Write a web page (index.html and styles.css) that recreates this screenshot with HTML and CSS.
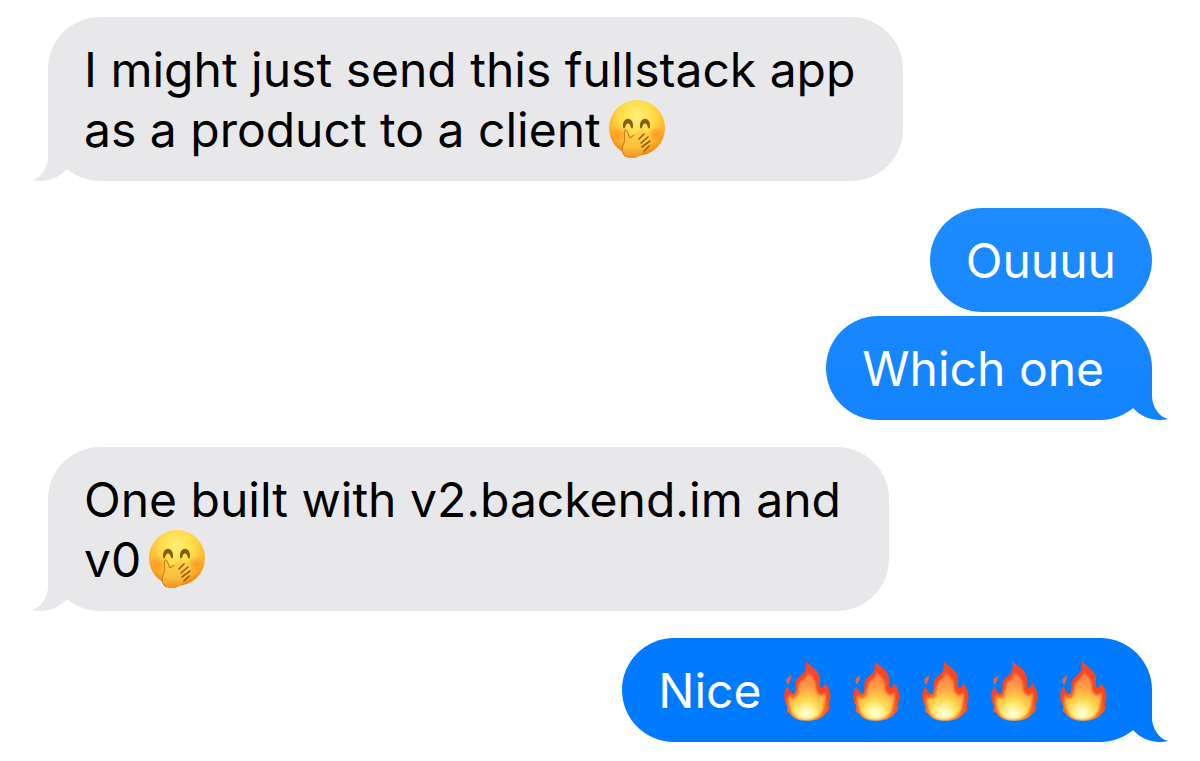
FILE: index.html
```html
<!DOCTYPE html>
<html lang="en">

<head>
    <meta charset="UTF-8">
    <meta name="viewport" content="width=device-width, initial-scale=1.0">
    <title>Messages</title>
    <link rel="stylesheet" href="styles.css">
</head>

<body>
    <!-- shared shapes -->
    <svg class="defs" aria-hidden="true">
        <defs>
            <radialGradient id="skin" cx="50%" cy="30%" r="68%">
                <stop offset="0" stop-color="#fff07a" />
                <stop offset="0.45" stop-color="#ffdb48" />
                <stop offset="0.78" stop-color="#fcb32a" />
                <stop offset="1" stop-color="#e98a1c" />
            </radialGradient>
            <radialGradient id="blush">
                <stop offset="0" stop-color="#ff7a1c" stop-opacity="0.55" />
                <stop offset="1" stop-color="#ff7a1c" stop-opacity="0" />
            </radialGradient>
            <linearGradient id="hand" x1="0" y1="0" x2="0" y2="1">
                <stop offset="0" stop-color="#ffd04a" />
                <stop offset="0.6" stop-color="#ffbf3c" />
                <stop offset="1" stop-color="#f08f20" />
            </linearGradient>
            <radialGradient id="flame-out" gradientUnits="userSpaceOnUse" cx="98" cy="180" r="150">
                <stop offset="0" stop-color="#ffc43a" />
                <stop offset="0.3" stop-color="#ff7a28" />
                <stop offset="0.5" stop-color="#f8441f" />
                <stop offset="1" stop-color="#f24a2c" />
            </radialGradient>
            <radialGradient id="flame-in" gradientUnits="userSpaceOnUse" cx="98" cy="192" r="140">
                <stop offset="0" stop-color="#ffffe8" />
                <stop offset="0.14" stop-color="#fff8a0" />
                <stop offset="0.34" stop-color="#ffd348" />
                <stop offset="0.6" stop-color="#ff9c46" />
                <stop offset="1" stop-color="#fb7046" />
            </radialGradient>
            <filter id="soft" x="-20%" y="-20%" width="140%" height="140%">
                <feGaussianBlur stdDeviation="4" />
            </filter>
        </defs>
        <symbol id="giggle" viewBox="8 8 56 58">
            <circle cx="36" cy="36" r="28" fill="url(#skin)" />
            <ellipse cx="17" cy="42" rx="9" ry="8" fill="url(#blush)" />
            <ellipse cx="55" cy="42" rx="9" ry="8" fill="url(#blush)" />
            <path d="M22 35C21 24 33 24 32 35C31 38 30 36 29 33C28 31 26 31 25 33C24 36 23 38 22 35Z" fill="#85600f" />
            <path d="M39 35C38 24 50 24 49 35C48 38 47 36 46 33C45 31 43 31 42 33C41 36 40 38 39 35Z" fill="#85600f" />
            <path d="M24 38C26 37 27 42 29 46L39 38C42 36 44 38 42 41L45 40C48 40 49 42 47 44C50 43 51 46 49 48C51 48 51 51 49 52L42 60C38 66 31 68 25 65C20 62 21 56 23 51C25 46 22 41 24 38Z" fill="url(#hand)" />
            <path d="M24 38C22 42 25 46 23 51C20 57 21 62 25 65" fill="none" stroke="#c97a16" stroke-width="1" />
            <path d="M24 38C26 37 27 42 29 46L33 43" fill="none" stroke="#a8701a" stroke-width="1" />
            <path d="M38 47L43 42M40 51L47 45M41 55L49 49M43 59L48 54" fill="none" stroke="#94600f" stroke-width="1.6" stroke-linecap="round" />
        </symbol>
        <symbol id="fire" viewBox="30 28 144 186">
            <path d="M98 28C104 42 140 52 141 85C142 98 138 108 147 112C153 108 154 100 158 97C164 107 176 122 173 145C171 158 166 164 170 172C170 182 163 188 159 189C148 206 130 213 98 213C72 213 55 204 47 190C40 188 37 182 38 178C41 175 40 170 38 166C28 148 26 125 40 107C46 118 50 128 58 130C70 126 58 100 70 84C80 72 100 64 96 45Z" fill="url(#flame-out)" />
            <path d="M48 70C56 84 44 92 43 103C36 96 34 84 41 80C46 78 48 75 48 70Z" fill="#f4603a" />
            <path d="M102 58C108 72 128 80 128 104C127 120 132 132 144 136C151 134 154 128 156 123C162 140 154 158 152 170C146 196 128 209 98 209C70 209 56 196 51 178C45 164 42 148 44 134C50 142 56 145 62 144C80 136 68 112 78 96C88 84 104 78 102 58Z" fill="url(#flame-in)" filter="url(#soft)" />
        </symbol>
        <symbol id="tail" viewBox="0 0 36 54">
            <path d="M20 0V30C20 40 27 51 36 53C24 56 10 52 1 42V30Z" />
        </symbol>
    </svg>

    <main class="chat">
        <div class="message received">
            <p class="text">I might just send this fullstack app<br>as a product to a client<svg class="face" role="img" aria-label="giggling face"><use href="#giggle" /></svg></p>
            <svg class="tail" aria-hidden="true"><use href="#tail" /></svg>
        </div>

        <div class="message sent light">
            <p class="text">Ouuuu</p>
        </div>
        <div class="message sent medium last">
            <p class="text">Which one</p>
            <svg class="tail" aria-hidden="true"><use href="#tail" /></svg>
        </div>

        <div class="message received">
            <p class="text">One built with v2.backend.im and<br>v0<svg class="face" role="img" aria-label="giggling face"><use href="#giggle" /></svg></p>
            <svg class="tail" aria-hidden="true"><use href="#tail" /></svg>
        </div>

        <div class="message sent last">
            <p class="text">Nice <span class="fires"><svg class="flame" role="img" aria-label="fire"><use href="#fire" /></svg><svg class="flame" role="img" aria-label="fire"><use href="#fire" /></svg><svg class="flame" role="img" aria-label="fire"><use href="#fire" /></svg><svg class="flame" role="img" aria-label="fire"><use href="#fire" /></svg><svg class="flame" role="img" aria-label="fire"><use href="#fire" /></svg></span></p>
            <svg class="tail" aria-hidden="true"><use href="#tail" /></svg>
        </div>
    </main>
</body>

</html>
```

FILE: styles.css
```css
* {
    margin: 0;
    padding: 0;
    box-sizing: border-box;
}

body {
    background-color: #fff;
    font-family: Inter, "Liberation Sans", sans-serif;
    font-size: 48px;
    line-height: 60px;
    color: #000;
}

.defs {
    position: absolute;
    width: 0;
    height: 0;
}

.chat {
    display: flex;
    flex-direction: column;
    padding: 17px 48px 19px;
}

.message {
    position: relative;
    padding: 23px 36px 21px;
    border-radius: 52px;
}

.message + .message {
    margin-top: 27px;
}

.message.sent + .message.sent {
    margin-top: 4px;
}

.received {
    align-self: flex-start;
    padding-right: 48px;
    background-color: #e8e8ea;
    fill: #e8e8ea;
}

.sent {
    align-self: flex-end;
    color: #fff;
    background-color: #007bff;
    fill: #007bff;
}

.sent.light {
    background: linear-gradient(#1e8bff, #1988ff);
}

.sent.medium {
    background: linear-gradient(#1988ff, #1383ff);
    fill: #1383ff;
}

.sent.last {
    padding-right: 48px;
}

.tail {
    position: absolute;
    right: -16px;
    bottom: 0;
    width: 36px;
    height: 54px;
}

.received .tail {
    right: auto;
    left: -16px;
    transform: scaleX(-1);
}

.face {
    width: 56px;
    height: 58px;
    margin-left: 8px;
    vertical-align: top;
}

.fires {
    display: inline-flex;
    gap: 20px;
    height: 60px;
    margin-left: 8px;
    margin-right: -4px;
    vertical-align: top;
}

.flame {
    width: 49px;
    height: 60px;
}
```
